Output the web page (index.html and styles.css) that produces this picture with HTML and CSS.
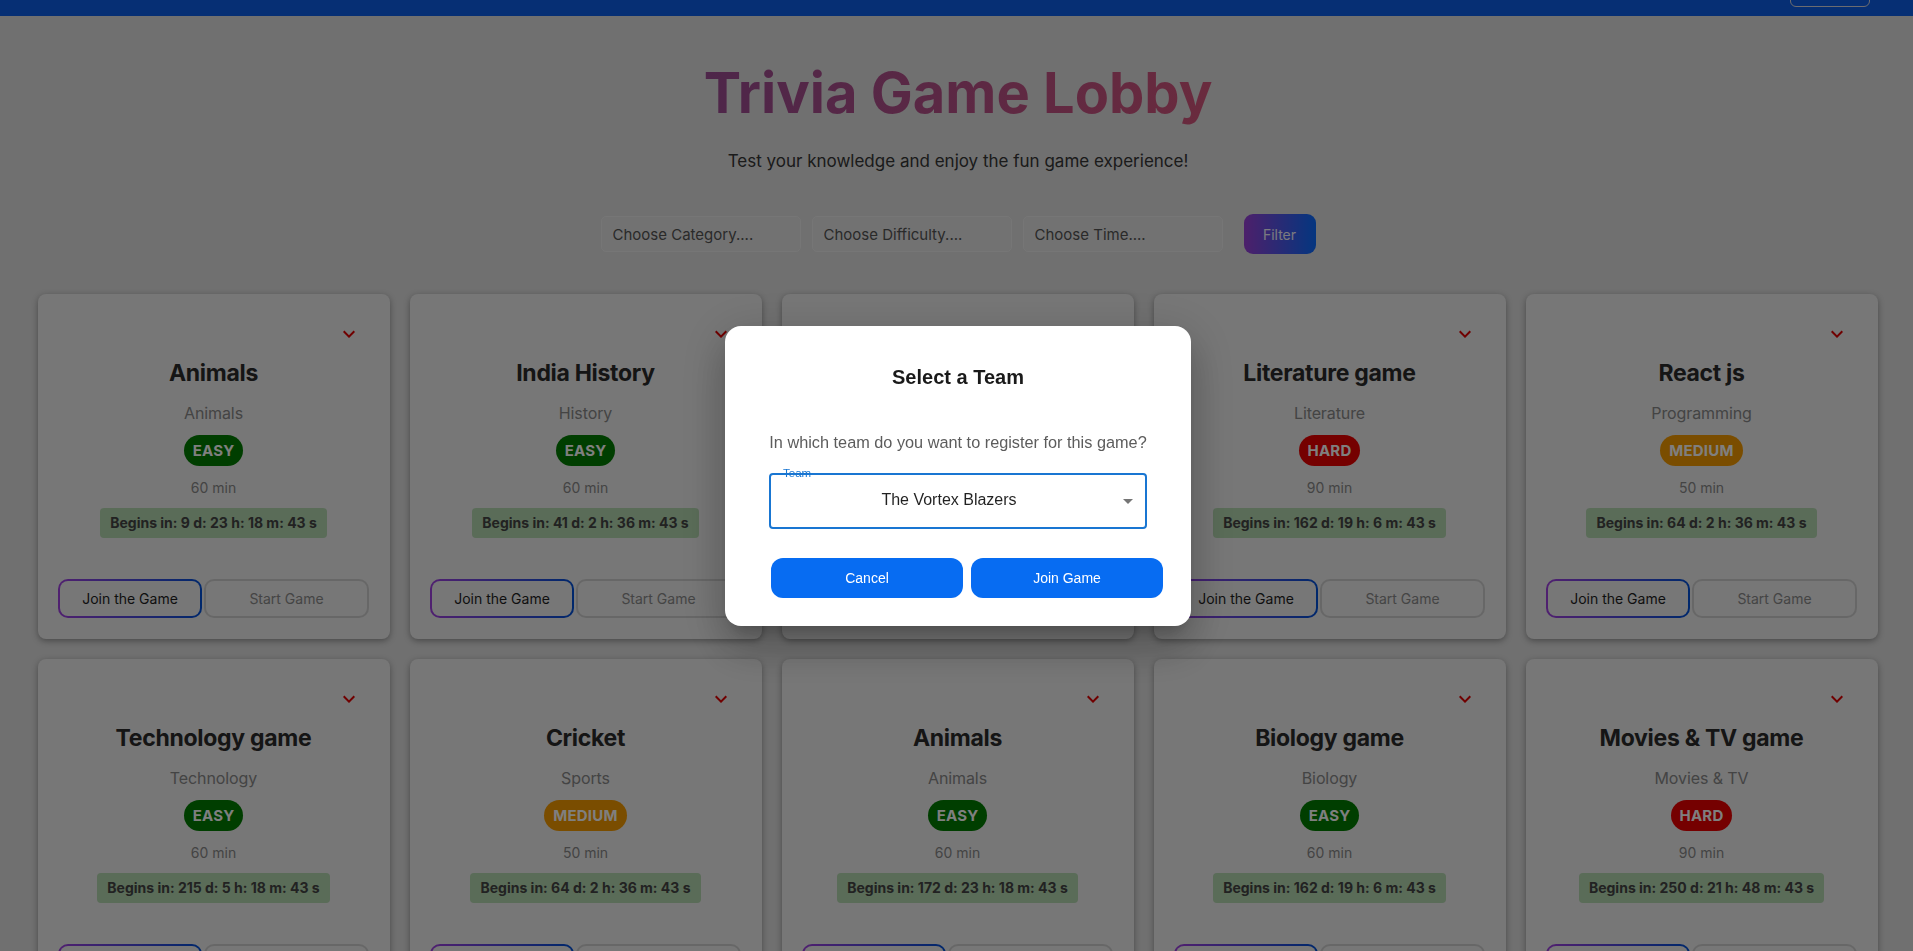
FILE: index.html
```html
<!DOCTYPE html>
<html lang="en">
<head>
<meta charset="utf-8">
<title>Trivia Game Lobby</title>
<link rel="stylesheet" href="styles.css">
</head>
<body>
<header class="navbar">
  <button class="nav-btn">Logout</button>
</header>

<main class="lobby">
  <h1 class="lobby-title">Trivia Game Lobby</h1>
  <p class="lobby-sub">Test your knowledge and enjoy the fun game experience!</p>

  <div class="filters">
    <input class="filter-input" type="text" placeholder="Choose Category....">
    <input class="filter-input" type="text" placeholder="Choose Difficulty....">
    <input class="filter-input" type="text" placeholder="Choose Time....">
    <button class="filter-btn">Filter</button>
  </div>

  <section class="grid">
    <div class="card">
      <div class="card-top"><span class="expand"><svg viewBox="0 0 24 24"><path d="M16.59 8.59 12 13.17 7.41 8.59 6 10l6 6 6-6z"/></svg></span></div>
      <h2 class="card-title">Animals</h2>
      <p class="card-cat">Animals</p>
      <span class="badge easy">EASY</span>
      <p class="card-time">60 min</p>
      <div class="countdown">Begins in: 9 d: 23 h: 18 m: 43 s</div>
      <div class="card-actions"><button class="btn-join">Join the Game</button><button class="btn-start">Start Game</button></div>
    </div>
    <div class="card">
      <div class="card-top"><span class="expand"><svg viewBox="0 0 24 24"><path d="M16.59 8.59 12 13.17 7.41 8.59 6 10l6 6 6-6z"/></svg></span></div>
      <h2 class="card-title">India History</h2>
      <p class="card-cat">History</p>
      <span class="badge easy">EASY</span>
      <p class="card-time">60 min</p>
      <div class="countdown">Begins in: 41 d: 2 h: 36 m: 43 s</div>
      <div class="card-actions"><button class="btn-join">Join the Game</button><button class="btn-start">Start Game</button></div>
    </div>
    <div class="card">
      <div class="card-top"><span class="expand"><svg viewBox="0 0 24 24"><path d="M16.59 8.59 12 13.17 7.41 8.59 6 10l6 6 6-6z"/></svg></span></div>
      <h2 class="card-title">Science game</h2>
      <p class="card-cat">Science</p>
      <span class="badge medium">MEDIUM</span>
      <p class="card-time">50 min</p>
      <div class="countdown">Begins in: 98 d: 4 h: 12 m: 43 s</div>
      <div class="card-actions"><button class="btn-join">Join the Game</button><button class="btn-start">Start Game</button></div>
    </div>
    <div class="card">
      <div class="card-top"><span class="expand"><svg viewBox="0 0 24 24"><path d="M16.59 8.59 12 13.17 7.41 8.59 6 10l6 6 6-6z"/></svg></span></div>
      <h2 class="card-title">Literature game</h2>
      <p class="card-cat">Literature</p>
      <span class="badge hard">HARD</span>
      <p class="card-time">90 min</p>
      <div class="countdown">Begins in: 162 d: 19 h: 6 m: 43 s</div>
      <div class="card-actions"><button class="btn-join">Join the Game</button><button class="btn-start">Start Game</button></div>
    </div>
    <div class="card">
      <div class="card-top"><span class="expand"><svg viewBox="0 0 24 24"><path d="M16.59 8.59 12 13.17 7.41 8.59 6 10l6 6 6-6z"/></svg></span></div>
      <h2 class="card-title">React js</h2>
      <p class="card-cat">Programming</p>
      <span class="badge medium">MEDIUM</span>
      <p class="card-time">50 min</p>
      <div class="countdown">Begins in: 64 d: 2 h: 36 m: 43 s</div>
      <div class="card-actions"><button class="btn-join">Join the Game</button><button class="btn-start">Start Game</button></div>
    </div>

    <div class="card">
      <div class="card-top"><span class="expand"><svg viewBox="0 0 24 24"><path d="M16.59 8.59 12 13.17 7.41 8.59 6 10l6 6 6-6z"/></svg></span></div>
      <h2 class="card-title">Technology game</h2>
      <p class="card-cat">Technology</p>
      <span class="badge easy">EASY</span>
      <p class="card-time">60 min</p>
      <div class="countdown">Begins in: 215 d: 5 h: 18 m: 43 s</div>
      <div class="card-actions"><button class="btn-join">Join the Game</button><button class="btn-start">Start Game</button></div>
    </div>
    <div class="card">
      <div class="card-top"><span class="expand"><svg viewBox="0 0 24 24"><path d="M16.59 8.59 12 13.17 7.41 8.59 6 10l6 6 6-6z"/></svg></span></div>
      <h2 class="card-title">Cricket</h2>
      <p class="card-cat">Sports</p>
      <span class="badge medium">MEDIUM</span>
      <p class="card-time">50 min</p>
      <div class="countdown">Begins in: 64 d: 2 h: 36 m: 43 s</div>
      <div class="card-actions"><button class="btn-join">Join the Game</button><button class="btn-start">Start Game</button></div>
    </div>
    <div class="card">
      <div class="card-top"><span class="expand"><svg viewBox="0 0 24 24"><path d="M16.59 8.59 12 13.17 7.41 8.59 6 10l6 6 6-6z"/></svg></span></div>
      <h2 class="card-title">Animals</h2>
      <p class="card-cat">Animals</p>
      <span class="badge easy">EASY</span>
      <p class="card-time">60 min</p>
      <div class="countdown">Begins in: 172 d: 23 h: 18 m: 43 s</div>
      <div class="card-actions"><button class="btn-join">Join the Game</button><button class="btn-start">Start Game</button></div>
    </div>
    <div class="card">
      <div class="card-top"><span class="expand"><svg viewBox="0 0 24 24"><path d="M16.59 8.59 12 13.17 7.41 8.59 6 10l6 6 6-6z"/></svg></span></div>
      <h2 class="card-title">Biology game</h2>
      <p class="card-cat">Biology</p>
      <span class="badge easy">EASY</span>
      <p class="card-time">60 min</p>
      <div class="countdown">Begins in: 162 d: 19 h: 6 m: 43 s</div>
      <div class="card-actions"><button class="btn-join">Join the Game</button><button class="btn-start">Start Game</button></div>
    </div>
    <div class="card">
      <div class="card-top"><span class="expand"><svg viewBox="0 0 24 24"><path d="M16.59 8.59 12 13.17 7.41 8.59 6 10l6 6 6-6z"/></svg></span></div>
      <h2 class="card-title">Movies &amp; TV game</h2>
      <p class="card-cat">Movies &amp; TV</p>
      <span class="badge hard">HARD</span>
      <p class="card-time">90 min</p>
      <div class="countdown">Begins in: 250 d: 21 h: 48 m: 43 s</div>
      <div class="card-actions"><button class="btn-join">Join the Game</button><button class="btn-start">Start Game</button></div>
    </div>
  </section>
</main>

<div class="backdrop">
  <div class="dialog" role="dialog" aria-labelledby="dlg-title">
    <h3 class="dialog-title" id="dlg-title">Select a Team</h3>
    <p class="dialog-text">In which team do you want to register for this game?</p>
    <div class="select">
      <span class="select-label">Team</span>
      <span class="select-value">The Vortex Blazers</span>
      <svg class="select-arrow" viewBox="0 0 24 24"><path d="M7 10l5 5 5-5z"/></svg>
    </div>
    <div class="dialog-actions">
      <button class="dlg-btn">Cancel</button>
      <button class="dlg-btn">Join Game</button>
    </div>
  </div>
</div>
</body>
</html>
```

FILE: styles.css
```css
* { box-sizing: border-box; }

html, body {
  margin: 0;
  height: 100%;
  overflow: hidden;
}

body {
  background: #e0e0e0;
  font-family: "Inter", "Noto Sans", sans-serif;
  color: #333;
}

.navbar {
  height: 16px;
  background: #0c5fe8;
  display: flex;
  justify-content: flex-end;
  align-items: flex-end;
  padding: 0 43px 9px 0;
  overflow: hidden;
}

.nav-btn {
  flex: none;
  width: 80px;
  height: 36px;
  border: 1px solid #d8d8e0;
  border-radius: 6px;
  background: transparent;
  color: #fff;
  font: 14px "Inter", sans-serif;
}

.lobby {
  padding: 44px 35px 0 38px;
}

.lobby-title {
  margin: 0 auto;
  width: max-content;
  text-align: center;
  font-size: 56px;
  line-height: 67px;
  font-weight: 700;
  letter-spacing: 0;
  background: linear-gradient(90deg, #9c4c94 0%, #d4567c 100%);
  -webkit-background-clip: text;
  background-clip: text;
  color: transparent;
}

.lobby-sub {
  margin: 23px 0 0;
  text-align: center;
  font-size: 17px;
  line-height: 22px;
  color: #363636;
}

.filters {
  margin-top: 42px;
  display: flex;
  justify-content: center;
  align-items: center;
  gap: 11px;
}

.filter-input {
  width: 200px;
  height: 36px;
  padding: 0 11px;
  border: 1px solid #ededed;
  border-radius: 5px;
  background: #e4e4e4;
  font: 15px "Inter", sans-serif;
  color: #333;
}

.filter-input::placeholder { color: #555555; }

.filter-btn {
  margin-left: 10px;
  width: 72px;
  height: 40px;
  border: none;
  border-radius: 9px;
  background: linear-gradient(90deg, #9a40d6 0%, #0a6cff 100%);
  color: #f4f4ff;
  font: 14px "Inter", sans-serif;
}

.grid {
  margin-top: 40px;
  display: grid;
  grid-template-columns: repeat(5, 352px);
  gap: 20px;
}

.card {
  display: flex;
  flex-direction: column;
  align-items: center;
  padding: 20px 21px 21px 20px;
  background: #eeeeee;
  border-radius: 8px;
  box-shadow: 0 2px 6px rgba(0, 0, 0, 0.35);
}

.card-top {
  align-self: stretch;
  display: flex;
  justify-content: flex-end;
  height: 40px;
}

.expand {
  width: 40px;
  height: 40px;
  display: flex;
  align-items: center;
  justify-content: center;
}

.expand svg {
  width: 24px;
  height: 24px;
  fill: #e00000;
}

.card-title {
  margin: 5px 0 0;
  font-size: 23px;
  line-height: 29px;
  font-weight: 700;
  letter-spacing: -0.3px;
  color: #2a2a2a;
}

.card-cat {
  margin: 16px 0 0;
  font-size: 16px;
  line-height: 19px;
  letter-spacing: -0.1px;
  color: #888888;
}

.badge {
  margin-top: 12px;
  padding: 6px 9px;
  border-radius: 16px;
  font-size: 15px;
  line-height: 19px;
  font-weight: 700;
  color: #fff;
  letter-spacing: 0.2px;
}

.badge.easy { background: #007c00; }
.badge.medium { background: #f59a00; }
.badge.hard { background: #ea0000; }

.card-time {
  margin: 13px 0 0;
  font-size: 14px;
  line-height: 17px;
  color: #888888;
}

.countdown {
  margin-top: 12px;
  padding: 6px 10px;
  border-radius: 4px;
  background: #b4d8b0;
  font-size: 14px;
  line-height: 18px;
  font-weight: 700;
  color: #444444;
}

.card-actions {
  align-self: stretch;
  margin-top: 41px;
  display: flex;
  gap: 2px;
}

.card-actions button {
  height: 39px;
  border-radius: 10px;
  font: 14px "Inter", sans-serif;
  background: #eeeeee;
}

.card-actions .btn-join {
  flex: none;
  width: 144px;
  border: 2px solid transparent;
  background: linear-gradient(#eeeeee, #eeeeee) padding-box,
              linear-gradient(90deg, #a040e0, #0050d8) border-box;
  color: #1e1e1e;
}

.card-actions .btn-start {
  flex: 1;
  border: 2px solid #cfcfcf;
  color: #8a8a8a;
}

/* modal */
.backdrop {
  position: fixed;
  inset: 0;
  background: rgba(0, 0, 0, 0.5);
  display: flex;
  align-items: center;
  justify-content: center;
  padding: 0 0 0 3px;
}

.dialog {
  width: 466px;
  height: 300px;
  margin-top: 1px;
  padding: 40px 44px 28px;
  background: #fff;
  border-radius: 16px;
  box-shadow: 0 11px 15px -7px rgba(0,0,0,.2), 0 24px 38px 3px rgba(0,0,0,.14), 0 9px 46px 8px rgba(0,0,0,.12);
  font-family: "Liberation Sans", Arial, sans-serif;
}

.dialog-title {
  margin: 0;
  text-align: center;
  font-size: 20px;
  line-height: 23px;
  font-weight: 700;
  color: #1a1a1a;
}

.dialog-text {
  margin: 44px -4px 0;
  text-align: center;
  font-size: 16.3px;
  line-height: 18px;
  color: #5c5c5c;
}

.select {
  position: relative;
  margin-top: 22px;
  height: 56px;
  border: 2px solid #1976d2;
  border-radius: 4px;
  display: flex;
  align-items: center;
  justify-content: center;
  padding: 0 32px 0 14px;
}

.select-label {
  position: absolute;
  left: 12px;
  top: -9px;
  font-size: 11.5px;
  line-height: 14px;
  color: #1976d2;
}

.select-value {
  font-size: 16px;
  color: rgba(0, 0, 0, 0.87);
  margin-top: -2px;
}

.select-arrow {
  position: absolute;
  right: 5px;
  top: 14px;
  width: 24px;
  height: 24px;
  fill: rgba(0, 0, 0, 0.54);
}

.dialog-actions {
  margin-top: 29px;
  margin-left: 2px;
  width: 392px;
  display: flex;
  gap: 8px;
}

.dlg-btn {
  flex: none;
  width: 192px;
  height: 40px;
  border: none;
  border-radius: 12px;
  background: #076cf2;
  color: #fff;
  font: 14px "Liberation Sans", Arial, sans-serif;
}
```
